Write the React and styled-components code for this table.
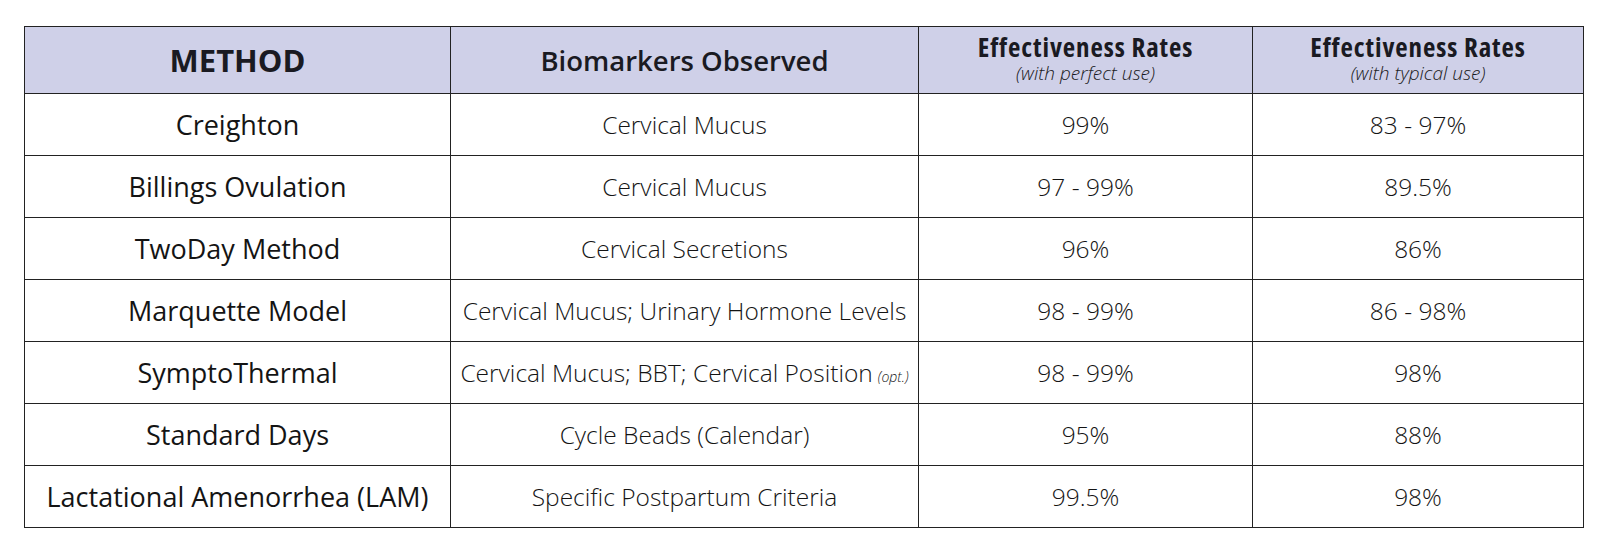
import React from "react";
import styled, { createGlobalStyle } from "styled-components";

const GlobalStyle = createGlobalStyle`
  body {
    margin: 0;
    background: #ffffff;
    font-family: "Open Sans", "Noto Sans", sans-serif;
    color: #1c1c1c;
  }
`;

const Page = styled.div`
  padding: 26px 0 0 24px;
`;

const Table = styled.table`
  width: 1559px;
  border-collapse: collapse;
  table-layout: fixed;
  border: 1.5px solid #222;
`;

const HeadRow = styled.tr`
  height: 67px;
  background: #cfd0e8;
`;

const HeadCell = styled.th`
  border: 1.5px solid #222;
  padding: 0 0 ${(p) => (p.$stacked ? "3px" : "0")};
  text-align: center;
  vertical-align: middle;
  color: #1a1a22;
`;

const MethodTitle = styled.span`
  font-size: 31px;
  font-weight: 700;
`;

const BiomarkerTitle = styled.span`
  font-size: 27.5px;
  font-weight: 600;
`;

const RateTitle = styled.div`
  font-size: 27px;
  font-weight: 700;
  font-stretch: 75%;
  letter-spacing: 0.9px;
  line-height: 30px;
`;

const RateNote = styled.div`
  font-size: 19px;
  font-weight: 300;
  font-style: italic;
  line-height: 23px;
`;

const Row = styled.tr`
  height: 62px;
`;

const Cell = styled.td`
  border: 1.5px solid #222;
  padding: 0;
  text-align: center;
  vertical-align: middle;
  font-size: ${(p) => (p.$method ? "27px" : "24.5px")};
  font-weight: ${(p) => (p.$method ? 400 : 300)};
  color: #141414;
  white-space: nowrap;
`;

const Opt = styled.span`
  font-size: 14px;
  font-style: italic;
  font-weight: 300;
  margin-left: 5px;
`;

const rows = [
  { method: "Creighton", markers: "Cervical Mucus", perfect: "99%", typical: "83 - 97%" },
  { method: "Billings Ovulation", markers: "Cervical Mucus", perfect: "97 - 99%", typical: "89.5%" },
  { method: "TwoDay Method", markers: "Cervical Secretions", perfect: "96%", typical: "86%" },
  {
    method: "Marquette Model",
    markers: "Cervical Mucus; Urinary Hormone Levels",
    perfect: "98 - 99%",
    typical: "86 - 98%",
  },
  {
    method: "SymptoThermal",
    markers: "Cervical Mucus; BBT; Cervical Position",
    opt: true,
    perfect: "98 - 99%",
    typical: "98%",
  },
  { method: "Standard Days", markers: "Cycle Beads (Calendar)", perfect: "95%", typical: "88%" },
  {
    method: "Lactational Amenorrhea (LAM)",
    markers: "Specific Postpartum Criteria",
    perfect: "99.5%",
    typical: "98%",
  },
];

export default function App() {
  return (
    <Page>
      <GlobalStyle />
      <Table>
        <colgroup>
          <col style={{ width: 426 }} />
          <col style={{ width: 468 }} />
          <col style={{ width: 334 }} />
          <col style={{ width: 331 }} />
        </colgroup>
        <thead>
          <HeadRow>
            <HeadCell>
              <MethodTitle>METHOD</MethodTitle>
            </HeadCell>
            <HeadCell>
              <BiomarkerTitle>Biomarkers Observed</BiomarkerTitle>
            </HeadCell>
            <HeadCell $stacked>
              <RateTitle>Effectiveness Rates</RateTitle>
              <RateNote>(with perfect use)</RateNote>
            </HeadCell>
            <HeadCell $stacked>
              <RateTitle>Effectiveness Rates</RateTitle>
              <RateNote>(with typical use)</RateNote>
            </HeadCell>
          </HeadRow>
        </thead>
        <tbody>
          {rows.map((r) => (
            <Row key={r.method}>
              <Cell $method>{r.method}</Cell>
              <Cell>
                {r.markers}
                {r.opt && <Opt>(opt.)</Opt>}
              </Cell>
              <Cell>{r.perfect}</Cell>
              <Cell>{r.typical}</Cell>
            </Row>
          ))}
        </tbody>
      </Table>
    </Page>
  );
}
